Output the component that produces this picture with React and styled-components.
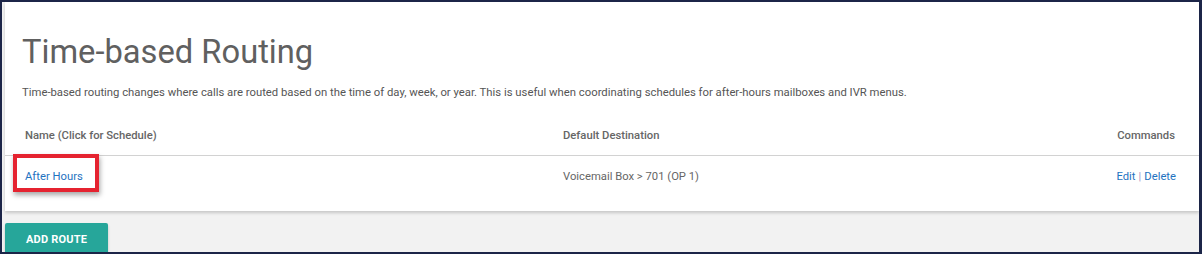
import styled, { createGlobalStyle } from "styled-components";

const GlobalStyle = createGlobalStyle`
  html, body {
    margin: 0;
    padding: 0;
  }
  body {
    font-family: Roboto, "Liberation Sans", sans-serif;
  }
`;

const Frame = styled.div`
  box-sizing: border-box;
  width: 1202px;
  height: 254px;
  border: 2px solid #1c2548;
  border-right-width: 3px;
  background: #f2f2f2;
  overflow: hidden;
`;

const Card = styled.section`
  margin-left: 3px;
  background: #fff;
  padding: 30px 20px 14px 17px;
  box-shadow: 0 2px 3px rgba(0, 0, 0, 0.18);
`;

const Title = styled.h1`
  margin: 0;
  font-size: 32.7px;
  font-weight: 400;
  line-height: 40px;
  color: #606060;
`;

const Intro = styled.p`
  margin: 13px 0 0;
  font-size: 11.3px;
  line-height: 16px;
  color: #555;
`;

const Table = styled.div`
  margin-top: 14px;
`;

const Row = styled.div`
  display: grid;
  grid-template-columns: 538px 1fr auto;
  align-items: center;
  height: ${(p) => (p.$head ? "40px" : "41px")};
  border-bottom: ${(p) => (p.$head ? "1px solid #d2d2d2" : "none")};
  margin: ${(p) => (p.$head ? "0 -20px 0 -17px" : "0")};
  padding: ${(p) => (p.$head ? "0 20px 0 17px" : "0")};
`;

const HeadCell = styled.div`
  padding: ${(p) => (p.$right ? "0 4px 0 3px" : "0 3px")};
  font-size: 11.25px;
  font-weight: 500;
  color: #666;
  text-align: ${(p) => (p.$right ? "right" : "left")};
`;

const Cell = styled.div`
  position: relative;
  padding: 0 3px;
  font-size: 11.25px;
  color: #666;
  text-align: ${(p) => (p.$right ? "right" : "left")};
`;

const Link = styled.a`
  color: #1f73c1;
  text-decoration: none;
  cursor: pointer;
`;

const Divider = styled.span`
  color: #a796c4;
  margin: 0 3px;
`;

const Highlight = styled.span`
  position: absolute;
  left: -9px;
  top: -16px;
  width: 86px;
  height: 38px;
  box-sizing: border-box;
  border: 4px solid #e52330;
  box-shadow: 1px 3px 5px rgba(0, 0, 0, 0.35);
  pointer-events: none;
`;

const Actions = styled.div`
  margin-top: 12px;
`;

const AddButton = styled.button`
  margin-left: 3px;
  width: 103px;
  height: 32px;
  border: none;
  border-radius: 2px;
  background: #26a69a;
  color: #fff;
  font-family: Roboto, "Liberation Sans", sans-serif;
  font-size: 11px;
  font-weight: 700;
  letter-spacing: 0.2px;
  text-transform: uppercase;
  box-shadow: 0 2px 3px rgba(0, 0, 0, 0.2);
  cursor: pointer;
`;

const routes = [
  { name: "After Hours", destination: "Voicemail Box > 701 (OP 1)" },
];

export default function App() {
  return (
    <>
      <GlobalStyle />
      <Frame>
        <Card>
          <Title>Time-based Routing</Title>
          <Intro>
            Time-based routing changes where calls are routed based on the time of day, week, or year. This is useful when coordinating schedules for after-hours mailboxes and IVR menus.
          </Intro>
          <Table>
            <Row $head>
              <HeadCell>Name (Click for Schedule)</HeadCell>
              <HeadCell>Default Destination</HeadCell>
              <HeadCell $right>Commands</HeadCell>
            </Row>
            {routes.map((r) => (
              <Row key={r.name}>
                <Cell>
                  <Link>{r.name}</Link>
                  <Highlight />
                </Cell>
                <Cell>{r.destination}</Cell>
                <Cell $right>
                  <Link>Edit</Link>
                  <Divider>|</Divider>
                  <Link>Delete</Link>
                </Cell>
              </Row>
            ))}
          </Table>
        </Card>
        <Actions>
          <AddButton>Add Route</AddButton>
        </Actions>
      </Frame>
    </>
  );
}
